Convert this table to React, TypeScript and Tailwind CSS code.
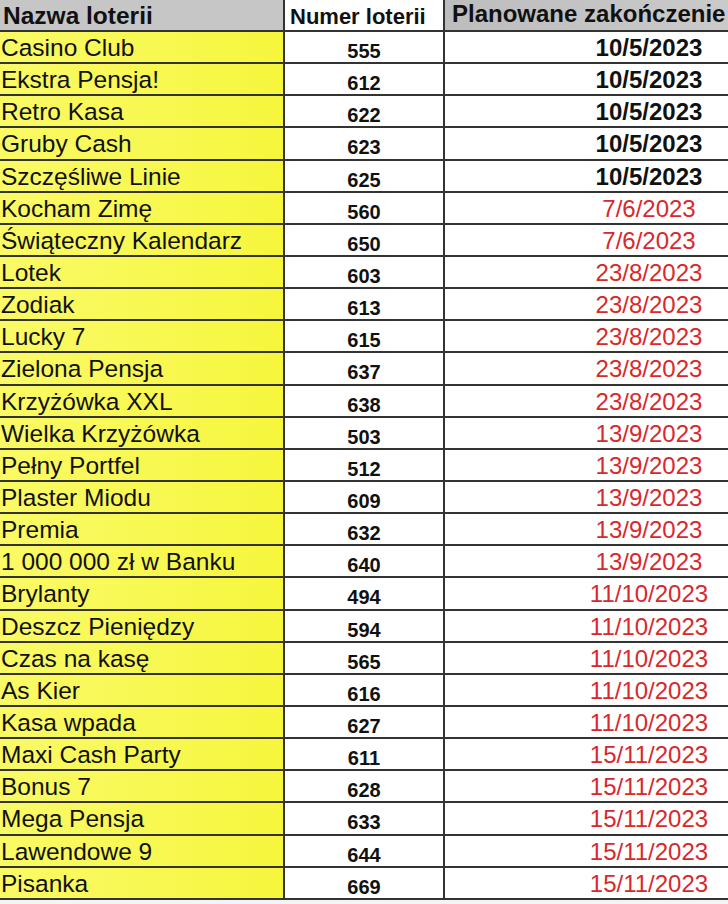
const rows: [string, string, string][] = [
  ["Casino Club", "555", "10/5/2023"],
  ["Ekstra Pensja!", "612", "10/5/2023"],
  ["Retro Kasa", "622", "10/5/2023"],
  ["Gruby Cash", "623", "10/5/2023"],
  ["Szczęśliwe Linie", "625", "10/5/2023"],
  ["Kocham Zimę", "560", "7/6/2023"],
  ["Świąteczny Kalendarz", "650", "7/6/2023"],
  ["Lotek", "603", "23/8/2023"],
  ["Zodiak", "613", "23/8/2023"],
  ["Lucky 7", "615", "23/8/2023"],
  ["Zielona Pensja", "637", "23/8/2023"],
  ["Krzyżówka XXL", "638", "23/8/2023"],
  ["Wielka Krzyżówka", "503", "13/9/2023"],
  ["Pełny Portfel", "512", "13/9/2023"],
  ["Plaster Miodu", "609", "13/9/2023"],
  ["Premia", "632", "13/9/2023"],
  ["1 000 000 zł w Banku", "640", "13/9/2023"],
  ["Brylanty", "494", "11/10/2023"],
  ["Deszcz Pieniędzy", "594", "11/10/2023"],
  ["Czas na kasę", "565", "11/10/2023"],
  ["As Kier", "616", "11/10/2023"],
  ["Kasa wpada", "627", "11/10/2023"],
  ["Maxi Cash Party", "611", "15/11/2023"],
  ["Bonus 7", "628", "15/11/2023"],
  ["Mega Pensja", "633", "15/11/2023"],
  ["Lawendowe 9", "644", "15/11/2023"],
  ["Pisanka", "669", "15/11/2023"],
]

export default function App() {
  return (
    <div className="h-[904px] w-[728px] overflow-hidden bg-[#f4f4f4] font-['Liberation_Sans',Arial,sans-serif] text-[#111]">
      <div className="grid w-[853px] grid-cols-[285px_160px_408px] grid-rows-[32px_repeat(27,32.15px)] bg-white">
        {/* header */}
        <div className="border-b-2 border-r-2 border-[#333] bg-[#c6c6c6] pl-[3px] pt-[4px] text-[24.5px] font-bold leading-none">
          Nazwa loterii
        </div>
        <div className="border-b-2 border-r-2 border-[#333] bg-white pl-[5px] pt-[6px] text-[22px] font-bold leading-none">
          Numer loterii
        </div>
        <div className="whitespace-nowrap border-b-2 border-[#333] bg-gradient-to-r from-[#bdbdbd] to-[#d0d0d0] pl-[7px] pt-[2px] text-[24px] font-bold leading-none">
          Planowane zakończenie
        </div>

        {rows.map(([name, num, date], i) => (
          <div key={name} className="contents">
            <div className="whitespace-nowrap border-b-2 border-r-2 border-[#333] bg-gradient-to-r from-[#fafa66] to-[#f6f63c] pl-[1px] pt-[4px] text-[24.5px] leading-none">
              {name}
            </div>
            <div className="border-b-2 border-r-2 border-[#333] pt-[9px] text-center text-[20px] font-bold leading-none">
              {num}
            </div>
            <div
              className={
                i < 5
                  ? "border-b-2 border-[#333] pt-[4px] text-center text-[24px] font-bold leading-none"
                  : "border-b-2 border-[#333] pt-[4px] text-center text-[24px] leading-none text-[#d8282b]"
              }
            >
              {date}
            </div>
          </div>
        ))}
      </div>
    </div>
  )
}
